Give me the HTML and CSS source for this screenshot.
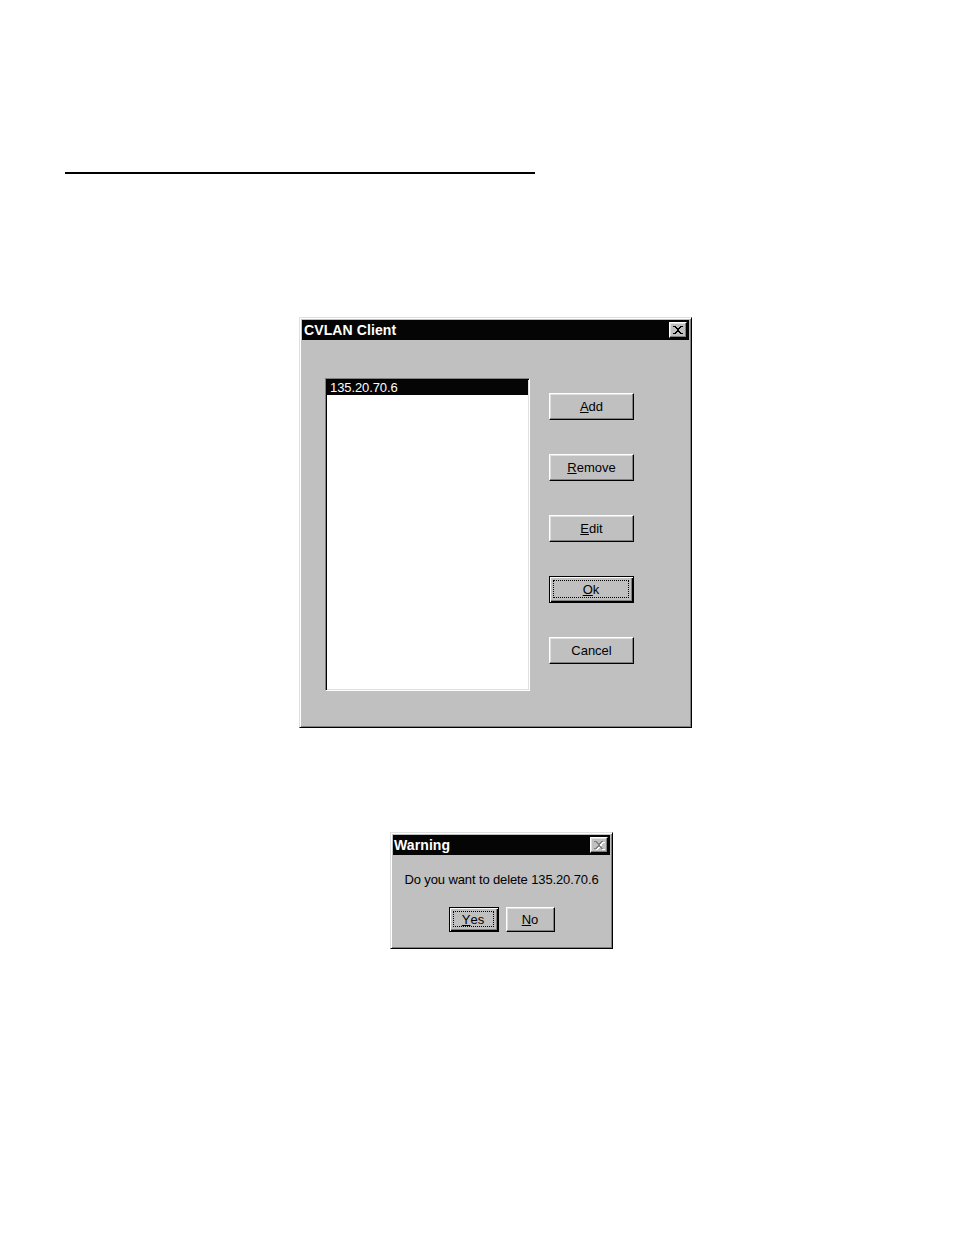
FILE: index.html
```html
<!DOCTYPE html>
<html>
<head>
<meta charset="utf-8">
<title>CVLAN Client</title>
<link rel="stylesheet" href="styles.css">
</head>
<body>
<div class="page">
  <div class="rule"></div>

  <div class="win win-main">
    <div class="titlebar">
      <span class="title">CVLAN Client</span>
      <span class="close">
        <svg width="10" height="8" viewBox="0 0 8 7" shape-rendering="crispEdges"><path fill="#000" d="M0 0h2v1H0zM6 0h2v1H6zM1 1h2v1H1zM5 1h2v1H5zM2 2h4v1H2zM3 3h2v1H3zM2 4h4v1H2zM1 5h2v1H1zM5 5h2v1H5zM0 6h2v1H0zM6 6h2v1H6z"/></svg>
      </span>
    </div>
    <div class="main-body">
      <div class="listbox">
        <div class="row sel">135.20.70.6</div>
      </div>
      <div class="buttons">
        <div class="btn"><span><u>A</u>dd</span></div>
        <div class="btn"><span><u>R</u>emove</span></div>
        <div class="btn"><span><u>E</u>dit</span></div>
        <div class="btn default"><span class="focus"><u>O</u>k</span></div>
        <div class="btn"><span>Cancel</span></div>
      </div>
    </div>
  </div>

  <div class="win win-warn">
    <div class="titlebar">
      <span class="title warn-title">Warning</span>
      <span class="close">
        <svg width="11" height="9" viewBox="0 0 9 8" shape-rendering="crispEdges"><path fill="#fff" transform="translate(1 1)" d="M0 0h2v1H0zM6 0h2v1H6zM1 1h2v1H1zM5 1h2v1H5zM2 2h4v1H2zM3 3h2v1H3zM2 4h4v1H2zM1 5h2v1H1zM5 5h2v1H5zM0 6h2v1H0zM6 6h2v1H6z"/><path fill="#808080" d="M0 0h2v1H0zM6 0h2v1H6zM1 1h2v1H1zM5 1h2v1H5zM2 2h4v1H2zM3 3h2v1H3zM2 4h4v1H2zM1 5h2v1H1zM5 5h2v1H5zM0 6h2v1H0zM6 6h2v1H6z"/></svg>
      </span>
    </div>
    <div class="warn-body">
      <div class="message">Do you want to delete 135.20.70.6</div>
      <div class="warn-buttons">
        <div class="btn small default yes"><span class="focus"><u>Y</u>es</span></div>
        <div class="btn small no"><span><u>N</u>o</span></div>
      </div>
    </div>
  </div>
</div>
</body>
</html>
```

FILE: styles.css
```css
body {
  margin: 0;
  background: #fff;
  font-family: "Liberation Sans", Arial, sans-serif;
  color: #000;
}

.page {
  padding-top: 172px;
}

.rule {
  margin-left: 65px;
  width: 470px;
  height: 2px;
  background: #000;
}

.win {
  box-sizing: border-box;
  background: #c0c0c0;
  border: 1px solid;
  border-color: #dfdfdf #000 #000 #dfdfdf;
  box-shadow: inset 1px 1px #fff, inset -1px -1px #808080;
  padding: 2px;
  display: flex;
  flex-direction: column;
}

.win-main {
  margin: 143px 0 0 299px;
  width: 393px;
  height: 411px;
}

.win-warn {
  margin: 104px 0 0 390px;
  width: 223px;
  height: 117px;
}

.titlebar {
  height: 20px;
  flex: none;
  background: #050505;
  display: flex;
  align-items: center;
  justify-content: space-between;
  padding: 0 2px 0 2px;
}

.title {
  color: #fff;
  font-weight: bold;
  font-size: 14px;
  letter-spacing: 0.1px;
}

.warn-title {
  margin-left: -1px;
}

.close {
  box-sizing: border-box;
  width: 18px;
  height: 16px;
  background: #c0c0c0;
  border: 1px solid;
  border-color: #fff #000 #000 #fff;
  box-shadow: inset -1px -1px #808080, inset 1px 1px #dfdfdf;
  display: flex;
  align-items: center;
  justify-content: center;
}

.main-body {
  display: flex;
  gap: 19px;
  padding: 38px 0 0 23px;
}

.listbox {
  box-sizing: border-box;
  width: 205px;
  height: 313px;
  background: #fff;
  border: 1px solid;
  border-color: #808080 #fff #fff #808080;
  box-shadow: inset 1px 1px #000, inset -1px -1px #dfdfdf;
  padding: 1px;
}

.row {
  height: 15px;
  line-height: 15px;
  font-size: 13px;
  padding-left: 3px;
  letter-spacing: -0.1px;
}

.row.sel {
  background: #050505;
  color: #fff;
}

.buttons {
  display: flex;
  flex-direction: column;
  gap: 34px;
  padding-top: 15px;
}

.btn {
  box-sizing: border-box;
  width: 85px;
  height: 27px;
  background: #c0c0c0;
  border: 1px solid;
  border-color: #fff #000 #000 #fff;
  box-shadow: inset -1px -1px #808080, inset 1px 1px #dfdfdf;
  font-size: 13px;
  display: flex;
  align-items: center;
  justify-content: center;
}

.btn.default {
  border-color: #000;
  box-shadow: inset 1px 1px #fff, inset -1px -1px #000, inset -2px -2px #808080;
  padding: 3px 4px 4px 3px;
}

.focus {
  flex: 1;
  align-self: stretch;
  border: 1px dotted #000;
  display: flex;
  align-items: center;
  justify-content: center;
}

.warn-body {
  display: flex;
  flex-direction: column;
  align-items: center;
  padding-top: 17px;
}

.message {
  font-size: 13px;
  line-height: 15px;
  letter-spacing: -0.12px;
}

.warn-buttons {
  display: flex;
  gap: 7px;
  margin-top: 20px;
}

.btn.small {
  height: 25px;
}

.btn.yes {
  width: 50px;
}

.btn.no {
  width: 49px;
}
```
